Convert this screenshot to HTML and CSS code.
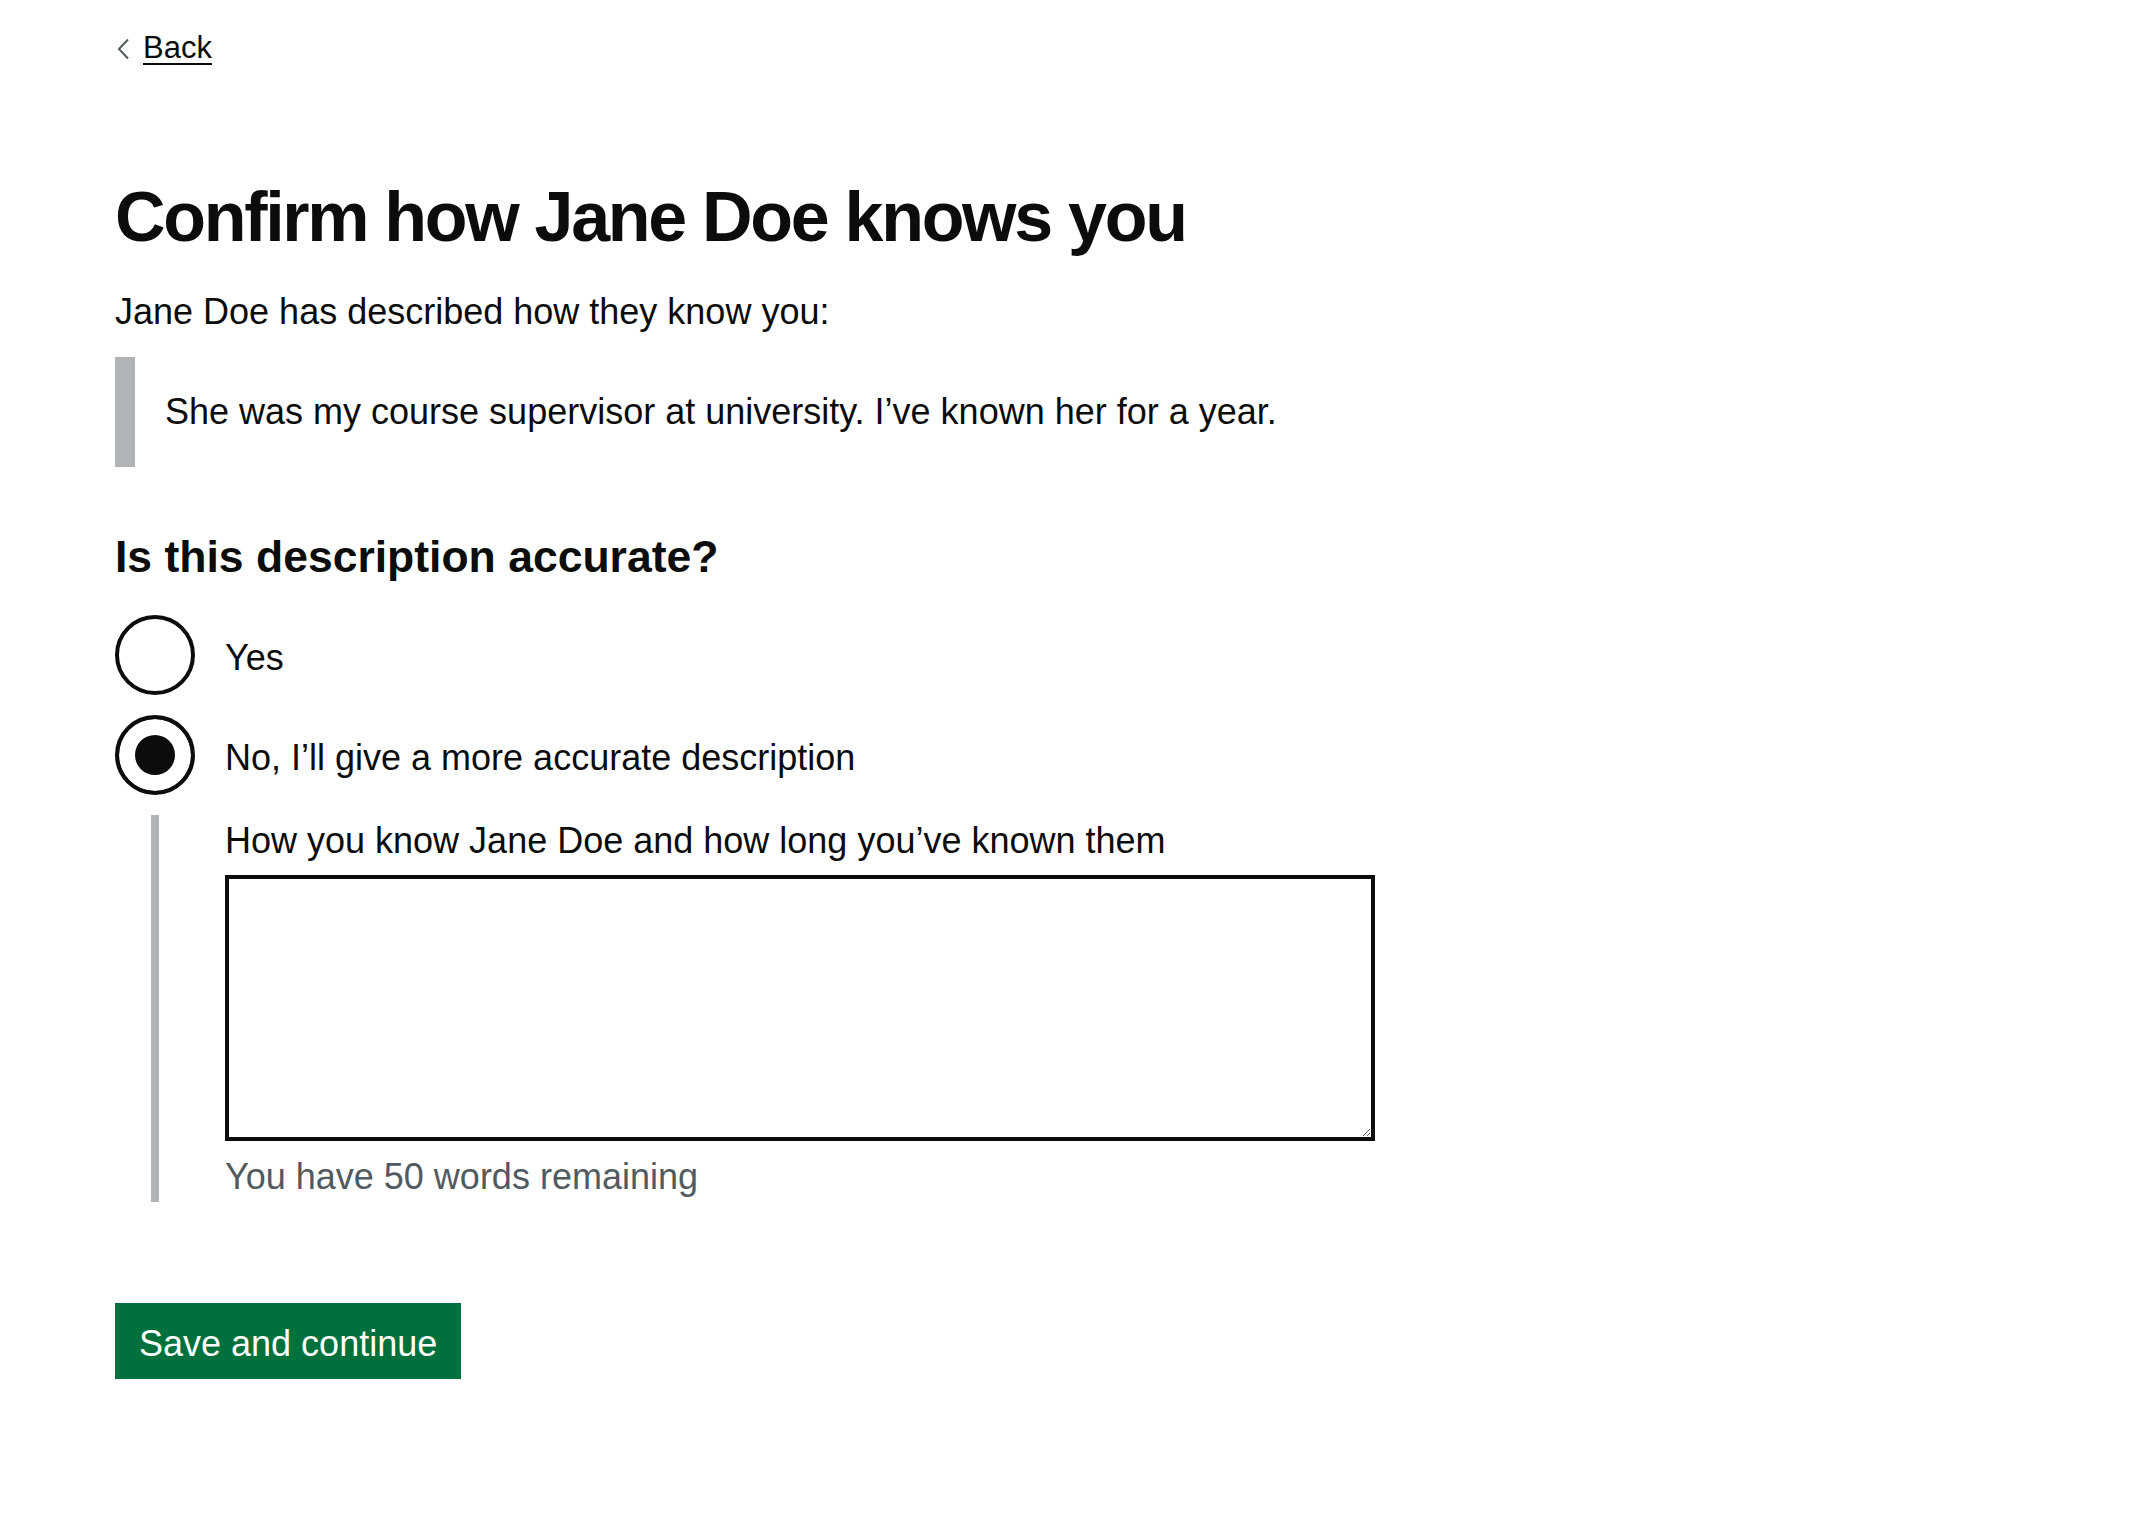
FILE: index.html
```html
<!DOCTYPE html>
<html lang="en">
<head>
<meta charset="utf-8">
<title>Confirm how Jane Doe knows you</title>
<link rel="stylesheet" href="styles.css">
</head>
<body>
<div class="page">
  <a class="back-link" href="#">
    <svg class="back-chevron" width="14" height="22" viewBox="0 0 14 22" aria-hidden="true"><path d="M12 1.5 L3 11 L12 20.5" fill="none" stroke="#505a5f" stroke-width="2"/></svg>
    <span class="back-text">Back</span>
  </a>
  <main class="main">
    <h1 class="heading-l">Confirm how Jane Doe knows you</h1>
    <p class="body-text">Jane Doe has described how they know you:</p>
    <div class="inset">She was my course supervisor at university. I’ve known her for a year.</div>
    <form class="form" action="#">
      <div class="form-group">
        <fieldset class="fieldset">
          <legend class="legend">Is this description accurate?</legend>
          <div class="radios">
            <div class="radio-item">
              <input class="radio-input" type="radio" name="accurate" id="accurate-yes">
              <label class="radio-label" for="accurate-yes">Yes</label>
            </div>
            <div class="radio-item">
              <input class="radio-input" type="radio" name="accurate" id="accurate-no" checked>
              <label class="radio-label" for="accurate-no">No, I’ll give a more accurate description</label>
            </div>
            <div class="conditional">
              <label class="field-label" for="description">How you know Jane Doe and how long you’ve known them</label>
              <textarea class="textarea" id="description" rows="5"></textarea>
              <div class="hint">You have 50 words remaining</div>
            </div>
          </div>
        </fieldset>
      </div>
      <button class="button" type="submit">Save and continue</button>
    </form>
  </main>
</div>
</body>
</html>
```

FILE: styles.css
```css
html, body {
  margin: 0;
  padding: 0;
  background: #ffffff;
}

body {
  font-family: "Liberation Sans", Arial, sans-serif;
  color: #0b0c0c;
}

.page {
  max-width: 1920px;
  margin: 0 auto;
  padding-top: 28px;
}

.back-link {
  display: flex;
  width: max-content;
  align-items: center;
  color: #0b0c0c;
  font-size: 31px;
  line-height: 40px;
  text-decoration: none;
}

.back-chevron {
  display: block;
  margin-left: 1px;
  margin-right: 13px;
  margin-top: 2px;
}

.back-text {
  text-decoration: underline;
  text-decoration-thickness: 2px;
  text-underline-offset: 5px;
}

.main {
  display: block;
}

.heading-l {
  margin: 109px 0 30px;
  font-size: 70px;
  line-height: 80px;
  font-weight: 700;
  letter-spacing: -2.3px;
}

.body-text {
  margin: 0 0 20px;
  font-size: 36px;
  line-height: 50px;
}

.inset {
  border-left: 20px solid #b1b4b6;
  padding: 30px;
  margin: 0 0 60px;
  font-size: 36px;
  line-height: 50px;
}

.form {
  display: flex;
  flex-direction: column;
  align-items: flex-start;
}

.form-group {
  align-self: stretch;
  margin-bottom: 101px;
}

.fieldset {
  margin: 0;
  padding: 0;
  border: 0;
  min-width: 0;
}

.legend {
  padding: 0;
  margin: 0 0 28px;
  font-size: 44.5px;
  line-height: 60px;
  font-weight: 700;
}

.radios {
  display: flex;
  flex-direction: column;
}

.radio-item {
  display: flex;
  align-items: flex-start;
  min-height: 80px;
  margin-bottom: 20px;
}

.radio-input {
  appearance: none;
  -webkit-appearance: none;
  margin: 0;
  width: 80px;
  height: 80px;
  flex-shrink: 0;
  box-sizing: border-box;
  border: 4px solid #0b0c0c;
  border-radius: 50%;
  background: #ffffff;
}

.radio-input:checked {
  background: #0b0c0c;
  box-shadow: inset 0 0 0 16px #ffffff;
}

.radio-label {
  padding: 18px 30px 0;
  font-size: 36px;
  line-height: 50px;
}

.conditional {
  margin-left: 36px;
  padding-left: 66px;
  border-left: 8px solid #b1b4b6;
  display: flex;
  flex-direction: column;
  align-items: flex-start;
}

.field-label {
  display: block;
  padding-top: 1px;
  margin-bottom: 9px;
  font-size: 36px;
  line-height: 50px;
}

.textarea {
  display: block;
  box-sizing: border-box;
  width: 1150px;
  height: 266px;
  margin: 0 0 11px;
  padding: 10px;
  border: 4px solid #0b0c0c;
  border-radius: 0;
  font-family: "Liberation Sans", Arial, sans-serif;
  font-size: 36px;
  line-height: 50px;
  resize: vertical;
}

.hint {
  color: #505a5f;
  font-size: 36px;
  line-height: 50px;
}

.button {
  appearance: none;
  -webkit-appearance: none;
  margin: 0;
  padding: 18px 20px 12px;
  border: 4px solid transparent;
  border-radius: 0;
  background: #00703c;
  color: #ffffff;
  font-family: "Liberation Sans", Arial, sans-serif;
  font-size: 36px;
  line-height: 38px;
  box-shadow: 0 4px 0 #002d18;
  cursor: pointer;
}
```
